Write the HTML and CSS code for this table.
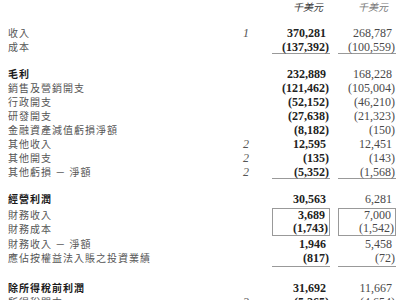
FILE: index.html
```html
<!DOCTYPE html>
<html lang="zh-Hant">
<head>
<meta charset="utf-8">
<title>綜合損益表</title>
<link rel="stylesheet" href="styles.css">
</head>
<body>
<div class="statement">
  <div class="row head">
    <span class="label"></span><span class="note"></span>
    <span class="amt cur">千美元</span><span class="amt prev">千美元</span>
  </div>
  <div class="spacer s12"></div>

  <div class="row"><span class="label">收入</span><span class="note">1</span><span class="amt cur pos">370,281</span><span class="amt prev pos">268,787</span></div>
  <div class="row rule"><span class="label">成本</span><span class="note"></span><span class="amt cur">(137,392)</span><span class="amt prev">(100,559)</span></div>
  <div class="spacer s13"></div>

  <div class="row total"><span class="label">毛利</span><span class="note"></span><span class="amt cur pos">232,889</span><span class="amt prev pos">168,228</span></div>
  <div class="row"><span class="label">銷售及營銷開支</span><span class="note"></span><span class="amt cur">(121,462)</span><span class="amt prev">(105,004)</span></div>
  <div class="row"><span class="label">行政開支</span><span class="note"></span><span class="amt cur">(52,152)</span><span class="amt prev">(46,210)</span></div>
  <div class="row"><span class="label">研發開支</span><span class="note"></span><span class="amt cur">(27,638)</span><span class="amt prev">(21,323)</span></div>
  <div class="row"><span class="label">金融資產減值虧損淨額</span><span class="note"></span><span class="amt cur">(8,182)</span><span class="amt prev">(150)</span></div>
  <div class="row"><span class="label">其他收入</span><span class="note">2</span><span class="amt cur pos">12,595</span><span class="amt prev pos">12,451</span></div>
  <div class="row"><span class="label">其他開支</span><span class="note">2</span><span class="amt cur">(135)</span><span class="amt prev">(143)</span></div>
  <div class="row rule"><span class="label">其他虧損 － 淨額</span><span class="note">2</span><span class="amt cur">(5,352)</span><span class="amt prev">(1,568)</span></div>
  <div class="spacer s13"></div>

  <div class="row total"><span class="label">經營利潤</span><span class="note"></span><span class="amt cur pos">30,563</span><span class="amt prev pos">6,281</span></div>
  <div class="group">
    <div class="label-stack">
      <div class="label-line">財務收入</div>
      <div class="label-line">財務成本</div>
    </div>
    <span class="note"></span>
    <div class="amt-box cur">
      <div class="line pos">3,689</div>
      <div class="line">(1,743)</div>
    </div>
    <div class="amt-box prev">
      <div class="line pos">7,000</div>
      <div class="line">(1,542)</div>
    </div>
  </div>
  <div class="row after-box"><span class="label">財務收入 － 淨額</span><span class="note"></span><span class="amt cur pos">1,946</span><span class="amt prev pos">5,458</span></div>
  <div class="row rule tall"><span class="label">應佔按權益法入賬之投資業績</span><span class="note"></span><span class="amt cur">(817)</span><span class="amt prev">(72)</span></div>
  <div class="spacer s14"></div>

  <div class="row total"><span class="label">除所得稅前利潤</span><span class="note"></span><span class="amt cur pos">31,692</span><span class="amt prev pos">11,667</span></div>
  <div class="row"><span class="label">所得稅開支</span><span class="note">3</span><span class="amt cur">(5,265)</span><span class="amt prev">(4,654)</span></div>
</div>
</body>
</html>
```

FILE: styles.css
```css
html, body {
  margin: 0;
  padding: 0;
  background: #ffffff;
}

.statement {
  width: 400px;
  padding: 0 4px 0 8px;
  box-sizing: border-box;
  font-family: "Noto Sans CJK TC", "Noto Sans CJK SC", sans-serif;
  font-size: 10px;
  letter-spacing: 1px;
  color: #555;
}

.row {
  display: flex;
  height: 14px;
  line-height: 14px;
}

.spacer.s12 { height: 12px; }
.spacer.s13 { height: 13px; }
.spacer.s14 { height: 14px; }

.label {
  flex: 1;
  white-space: nowrap;
}

.note {
  width: 30px;
  margin-right: 11px;
  text-align: center;
  font-family: "Liberation Serif", serif;
  font-style: italic;
  font-size: 12px;
  letter-spacing: 0;
  color: #555;
}

.amt, .amt-box {
  width: 58px;
  box-sizing: border-box;
  text-align: right;
  font-family: "Liberation Serif", serif;
  font-size: 12px;
  letter-spacing: 0;
  padding-right: 1px;
  white-space: nowrap;
}

.amt.prev, .amt-box.prev {
  margin-left: 8px;
}

.cur {
  font-weight: bold;
  color: #222;
}

.prev {
  color: #4a4a4a;
}

.pos {
  padding-right: 4px;
}

.rule .amt {
  border-bottom: 1px solid #999;
}

.total .label {
  font-weight: bold;
  color: #1a1a1a;
}

.head .amt {
  font-family: "Noto Sans CJK TC", "Noto Sans CJK SC", sans-serif;
  font-style: italic;
  font-size: 10px;
  letter-spacing: 0;
  padding-right: 7px;
  font-weight: normal;
  color: #333;
}

.head .amt.prev {
  color: #777;
  padding-right: 8px;
}

.group {
  display: flex;
  margin-top: 2px;
  height: 28px;
}

.label-stack {
  flex: 1;
}

.label-line {
  height: 14px;
  line-height: 14px;
  white-space: nowrap;
}

.line {
  height: 13px;
  line-height: 13px;
}

.amt-box {
  border: 1px solid #999;
}

.amt-box .line.pos {
  padding-right: 3px;
}

.after-box {
  margin-top: 1px;
}

.row.tall {
  height: 16px;
}
```
